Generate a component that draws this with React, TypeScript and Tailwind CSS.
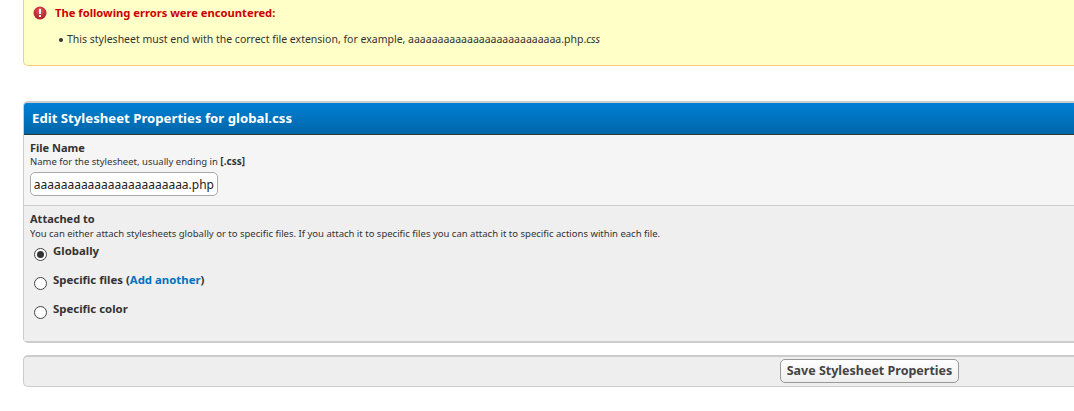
const tahoma = 'font-["Noto_Sans","DejaVu_Sans",sans-serif]'

function ErrorIcon() {
  return (
    <svg width="14" height="14" viewBox="0 0 14 14" className="shrink-0">
      <defs>
        <radialGradient id="err" cx="50%" cy="35%" r="70%">
          <stop offset="0%" stopColor="#e8535a" />
          <stop offset="100%" stopColor="#a81820" />
        </radialGradient>
      </defs>
      <circle cx="7" cy="7" r="6.5" fill="url(#err)" />
      <rect x="6" y="2.8" width="2" height="5.2" rx="0.6" fill="#fff" />
      <rect x="6" y="9" width="2" height="2" rx="0.5" fill="#fff" />
    </svg>
  )
}

function Radio({ checked }: { checked?: boolean }) {
  return (
    <span className="mt-[5px] flex h-[13px] w-[13px] shrink-0 items-center justify-center rounded-full border border-[#444] bg-white">
      {checked && <span className="h-[7px] w-[7px] rounded-full bg-[#333]" />}
    </span>
  )
}

export default function App() {
  return (
    <div className={`h-[411px] w-[1074px] overflow-hidden bg-white pl-[23px] text-[#333] ${tahoma}`}>
      <div className="h-[66px] w-[1100px] rounded-bl-[5px] border-b border-l border-[#ffc97f] bg-[#ffffc8] pt-[5px] pl-[9px]">
        <div className="flex h-[16px] items-center gap-[8px]">
          <ErrorIcon />
          <span className="text-[11.2px] font-bold text-[#c00]">
            The following errors were encountered:
          </span>
        </div>
        <div className="mt-[11px] flex h-[16px] items-center pl-[26px] text-[10.5px] text-[#333]">
          <span className="mr-[4px] h-[4px] w-[4px] rounded-full bg-[#333]" />
          <span>
            This stylesheet must end with the correct file extension, for example,
            aaaaaaaaaaaaaaaaaaaaaaaaaa.php.<em>css</em>
          </span>
        </div>
      </div>

      <div className="mt-[35px] w-[1100px] rounded-tl-[5px] rounded-bl-[5px] border-t-2 border-b-2 border-l border-[#ccc] bg-[#f5f5f5]">
        <div className="box-content flex h-[30px] items-center rounded-tl-[3px] border-b border-[#263c30] bg-gradient-to-b from-[#0080d6] to-[#0066a8] pt-[1px] pl-[8px] text-[13.2px] font-bold text-white">
          Edit Stylesheet Properties for global.css
        </div>

        <div className="h-[71px] border-b border-[#ccc] bg-[#f5f5f5] pt-[5px] pl-[6px]">
          <div className="text-[11px] leading-[15px] font-bold">File Name</div>
          <div className="text-[9.5px] leading-[12px]">
            Name for the stylesheet, usually ending in <strong className="text-[10px]">[.css]</strong>
          </div>
          <input
            readOnly
            value="aaaaaaaaaaaaaaaaaaaaaaaaaaaaaaaaaaaaaaaa.php"
            dir="rtl"
            className="mt-[4px] h-[24px] w-[188px] rounded-[5px] border border-[#aaa] bg-white px-[3px] text-[12px] text-[#222] outline-none"
          />
        </div>

        <div className="h-[135px] bg-[#efefef] pt-[4px] pl-[6px]">
          <div className="text-[11px] leading-[18px] font-bold">Attached to</div>
          <div className="text-[9.5px] leading-[12px]">
            You can either attach stylesheets globally or to specific files. If you attach it to specific files you can attach it to specific actions within each file.
          </div>
          <div className="mt-[3px] flex flex-col gap-[11px] pl-[4px] text-[11.4px] leading-[15px] font-bold">
            <label className="flex gap-[6px]">
              <Radio checked />
              Globally
            </label>
            <label className="flex gap-[6px]">
              <Radio />
              <span>
                Specific files (<span className="text-[#0072bc]">Add another</span>)
              </span>
            </label>
            <label className="flex gap-[6px]">
              <Radio />
              Specific color
            </label>
          </div>
        </div>
      </div>

      <div className="mt-[12px] flex h-[32px] w-[1100px] items-center rounded-l-[5px] border-t-2 border-b border-l border-[#ccc] bg-[#eee] pl-[756px]">
        <button className="mb-[1px] h-[24px] w-[179px] whitespace-nowrap rounded-[5px] border border-[#999] bg-gradient-to-b from-white to-[#eee] pt-[1px] text-[12.5px] font-bold text-[#444]">
          Save Stylesheet Properties
        </button>
      </div>
    </div>
  )
}
